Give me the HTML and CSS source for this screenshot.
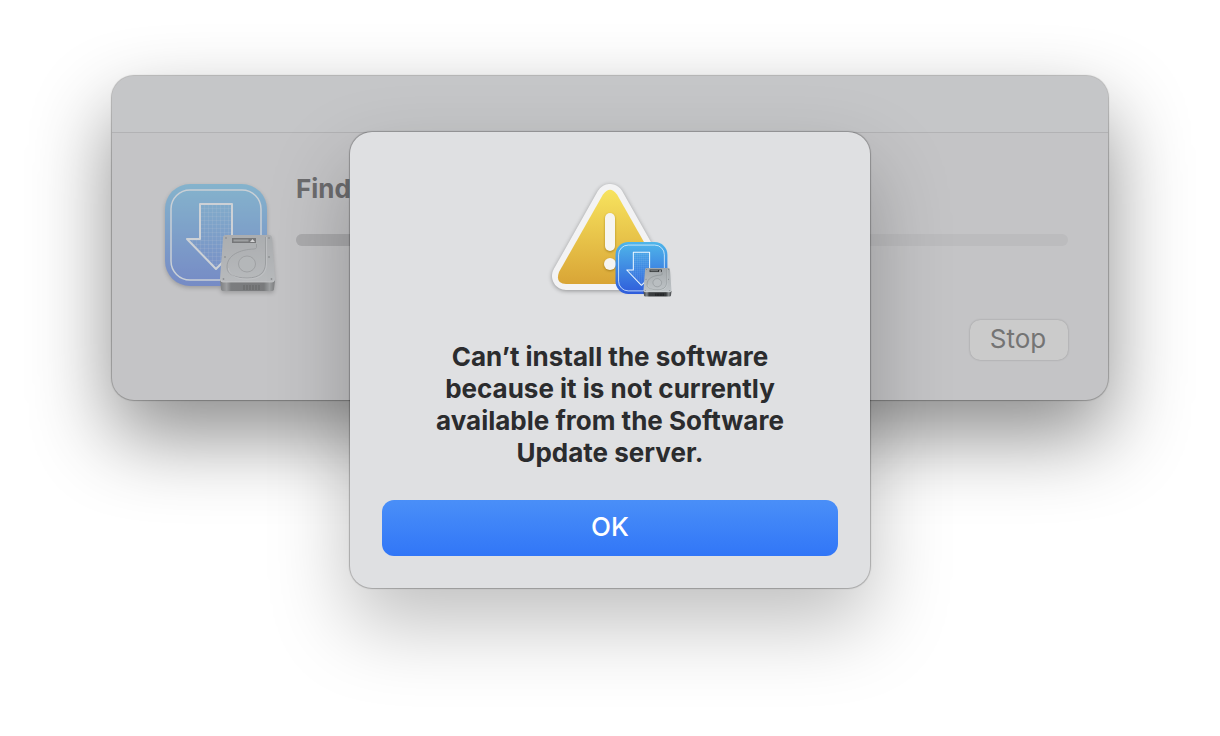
FILE: index.html
```html
<!DOCTYPE html>
<html lang="en">
<head>
    <meta charset="UTF-8">
    <meta name="viewport" content="width=device-width, initial-scale=1.0">
    <title>Install Command Line Developer Tools</title>
    <link rel="stylesheet" href="styles.css">
</head>
<body>
    <!-- Shared icon artwork -->
    <svg class="sprite" width="0" height="0" aria-hidden="true">
        <defs>
            <linearGradient id="app-blue" x1="0" y1="0" x2="0" y2="1">
                <stop offset="0" stop-color="#4fb6ea"/>
                <stop offset="1" stop-color="#2f5cdb"/>
            </linearGradient>
            <linearGradient id="drive-top" x1="0" y1="0" x2="0" y2="1">
                <stop offset="0" stop-color="#a3a8ab"/>
                <stop offset="1" stop-color="#c0c5c8"/>
            </linearGradient>
            <linearGradient id="drive-base" x1="0" y1="0" x2="1" y2="0">
                <stop offset="0" stop-color="#3b3e40"/>
                <stop offset="0.12" stop-color="#85898b"/>
                <stop offset="0.2" stop-color="#3b3e40"/>
                <stop offset="0.8" stop-color="#36393b"/>
                <stop offset="0.9" stop-color="#85898b"/>
                <stop offset="1" stop-color="#3b3e40"/>
            </linearGradient>
            <linearGradient id="warning-yellow" x1="0" y1="0" x2="0" y2="1">
                <stop offset="0" stop-color="#f7e35e"/>
                <stop offset="1" stop-color="#d9a536"/>
            </linearGradient>
            <pattern id="arrow-grid" x="36" y="22" width="4" height="4" patternUnits="userSpaceOnUse">
                <path d="M4 0H0V4" fill="none" stroke="#fff" stroke-width="0.8" opacity="0.28"/>
            </pattern>
            <symbol id="installer" viewBox="0 0 112 112">
                <rect x="1" y="2" width="102" height="102" rx="25" fill="url(#app-blue)"/>
                <rect x="7" y="8" width="90" height="90" rx="19" fill="none" stroke="#e6f4ff" stroke-width="1.5"/>
                <path d="M36 22H68V57H81.500L52 87L23 57H36Z" fill="url(#arrow-grid)" stroke="#eef8ff" stroke-width="2" stroke-linejoin="round"/>
                <path d="M56 98L57 107Q57 109 60 109H107Q110 109 110 107L111 98Z" fill="url(#drive-base)"/>
                <path d="M80 103V108M83 103V108M86 103V108M89 103V108M92 103V108M95 103V108" stroke="#1c1e20" stroke-width="1.6"/>
                <path d="M62 53H105Q108 53 108 56L111 97Q111 100 108 100H59Q56 100 56 97L59 56Q59 53 62 53Z" fill="url(#drive-top)"/>
                <path d="M57 98Q57 100 59 100H108Q110 100 110 98" fill="none" stroke="#e1e4e5" stroke-width="0.8"/>
                <rect x="68" y="56" width="24" height="5" fill="#2f3234"/>
                <rect x="69.500" y="57.500" width="15" height="2" fill="#85898b"/>
                <path d="M86 60L88.500 57L91 60Z" fill="#fff"/>
                <path d="M92.500 62V65.500Q92.500 66.800 90 67C76 67.500 63 73 63 85C63 92 70 96 83 96C96 96 101 90 101.500 82V55" fill="none" stroke="#7c8184" stroke-width="0.9"/>
                <path d="M64.500 86C65 93 72 97 83 97C97 97 102.300 91 102.500 82V55" fill="none" stroke="#dfe3e5" stroke-width="0.6"/>
                <ellipse cx="83" cy="82" rx="8.500" ry="8" fill="#b9bec1" stroke="#7b8083" stroke-width="0.8"/>
                <g fill="#64696c">
                    <circle cx="62" cy="56" r="0.900"/><circle cx="105" cy="56" r="0.900"/>
                    <circle cx="61" cy="75" r="0.900"/><circle cx="105" cy="75" r="0.900"/>
                    <circle cx="59.500" cy="97" r="0.900"/><circle cx="107.500" cy="97" r="0.900"/>
                </g>
            </symbol>
        </defs>
    </svg>

    <main class="window">
        <header class="titlebar"></header>

        <section class="window-body">
            <svg class="window-icon" viewBox="0 0 112 112" aria-hidden="true"><use href="#installer"/></svg>
            <div class="details">
                <label class="status" for="progress">Find</label>
                <progress class="progress" id="progress" value="30" max="100"></progress>
                <button class="stop-button" type="button">Stop</button>
            </div>
        </section>

        <section class="alert" role="alertdialog" aria-labelledby="alert-message">
            <svg class="alert-icon" viewBox="0 0 124 120" aria-hidden="true">
                <g stroke-linejoin="round">
                    <path class="warning-edge" d="M62 17L18 95H106Z" fill="#f3f3f4" stroke="#f3f3f4" stroke-width="28"/>
                    <path d="M55 13.500Q62 4 69 13.500L113 91Q117 103 106 103H18Q7 103 11 91Z" fill="url(#warning-yellow)"/>
                </g>
                <g class="warning-mark" fill="#f6f5f1">
                    <rect x="57" y="32" width="10" height="38" rx="5"/>
                    <circle cx="62" cy="83" r="6"/>
                </g>
                <use href="#installer" x="67" y="60" width="57" height="57"/>
            </svg>
            <p class="alert-message" id="alert-message">Can’t install the software because it is not currently available from the Software Update server.</p>
            <button class="ok-button" type="button">OK</button>
        </section>
    </main>
</body>
</html>
```

FILE: styles.css
```css
* {
    box-sizing: border-box;
}

body {
    font-family: Inter, "Liberation Sans", sans-serif;
    font-size: 26px;
    line-height: 32px;
    background-color: #ffffff;
    min-height: 100vh;
    margin: 0;
    padding: 76px 112px;
}

.sprite {
    position: absolute;
}

.window {
    position: relative;
    background-color: #c4c4c6;
    border-radius: 22px;
    box-shadow: 0 0 1px 1px rgba(0, 0, 0, 0.25), 0 36px 80px rgba(0, 0, 0, 0.45);
}

.titlebar {
    height: 57px;
    background-color: #c5c6c8;
    border-bottom: 1px solid #b2b2b4;
    border-radius: 22px 22px 0 0;
}

.window-body {
    display: flex;
    gap: 20px;
    padding: 40px 40px 40px 52px;
}

.window-icon {
    flex: none;
    width: 112px;
    height: 112px;
    margin-top: 9px;
    opacity: 0.5;
    filter: brightness(0.9) drop-shadow(0 2px 2px rgba(0, 0, 0, 0.4));
}

.details {
    flex: 1;
    display: flex;
    flex-direction: column;
}

.status {
    font-weight: 700;
    color: #6c6c6e;
}

.progress {
    appearance: none;
    width: 100%;
    height: 12px;
    margin-top: 29px;
    border: none;
    border-radius: 6px;
    overflow: hidden;
    background-color: #bcbcbe;
}

.progress::-webkit-progress-bar {
    background-color: #bcbcbe;
}

.progress::-webkit-progress-value {
    background-color: #ababad;
}

.stop-button {
    align-self: flex-end;
    width: 98px;
    height: 40px;
    margin-top: 74px;
    padding: 0 2px 2px 0;
    font: inherit;
    color: #747474;
    background-color: #cbcbcb;
    border: none;
    border-radius: 10px;
    box-shadow: 0 0 2px rgba(0, 0, 0, 0.25);
}

/* Alert sheet hangs from the bottom of the titlebar */
.alert {
    position: absolute;
    top: 56px;
    left: 0;
    right: 0;
    width: 520px;
    margin: 0 auto;
    padding: 49px 32px 32px;
    display: flex;
    flex-direction: column;
    align-items: center;
    background-color: #dfe0e2;
    border-radius: 22px;
    box-shadow: 0 0 1px 1px rgba(0, 0, 0, 0.25), 0 36px 80px rgba(0, 0, 0, 0.25);
}

.alert-icon {
    width: 124px;
    height: 120px;
    overflow: visible;
}

.warning-edge {
    filter: drop-shadow(0 1px 2px rgba(0, 0, 0, 0.35));
}

.warning-mark {
    filter: drop-shadow(0 1px 1px rgba(110, 80, 0, 0.5));
}

.alert-message {
    max-width: 400px;
    margin: 40px 0 31px;
    font-weight: 700;
    text-align: center;
    color: #2b2c2e;
}

.ok-button {
    width: 100%;
    height: 56px;
    padding: 0 0 2px;
    font: inherit;
    font-weight: 500;
    color: #ffffff;
    background: linear-gradient(#4a8ff8, #3176f7);
    border: none;
    border-radius: 12px;
}
```
